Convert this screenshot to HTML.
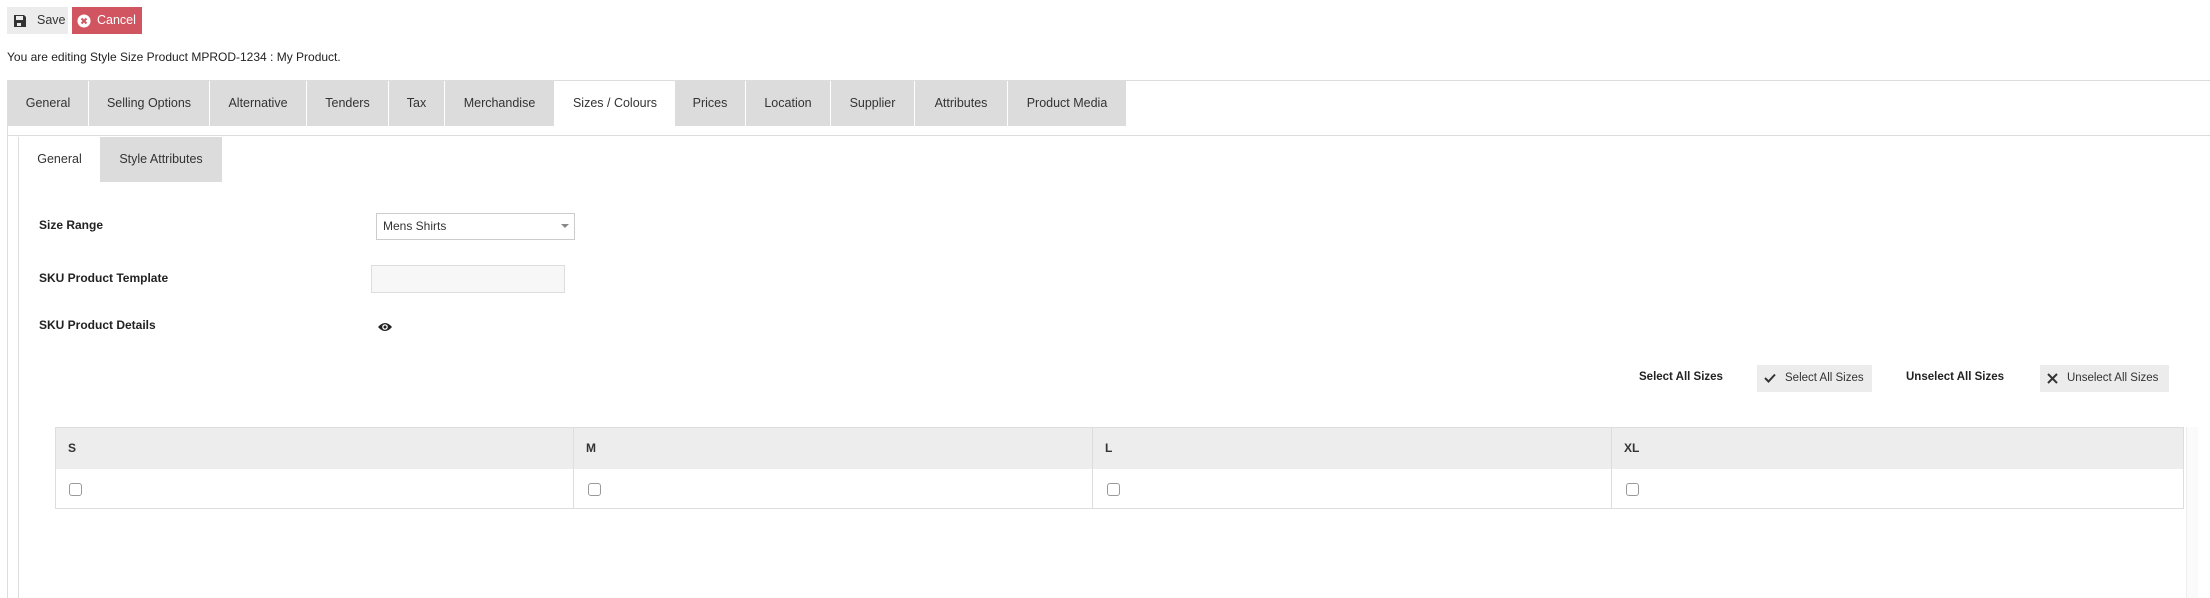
<!DOCTYPE html>
<html><head><meta charset="utf-8"><style>
*{box-sizing:border-box;margin:0;padding:0}
body{width:2210px;height:598px;overflow:hidden;background:#fff;font-family:"Liberation Sans",sans-serif;font-size:12.5px;color:#333;position:relative;white-space:nowrap}
.a{position:absolute}
.tab{position:absolute;top:81px;height:45px;background:#dcdcdc;line-height:45px;text-align:center;font-size:12.5px;color:#333}
.lbl{position:absolute;left:39px;font-weight:bold;font-size:12px;color:#222}
.cb{position:absolute;width:13px;height:13px;border:1px solid #999;border-radius:3px;background:#fff}
</style></head><body>
<div class="a" style="left:7px;top:7px;width:61px;height:27px;background:#ececec;line-height:27px;padding-left:30px;font-size:12.5px">Save</div>
<svg class="a" style="left:13px;top:14px" width="14" height="14" viewBox="0 0 14 14"><path d="M1 1h10l2 2v10H1z" fill="#333"/><rect x="3" y="2" width="7" height="4" fill="#ececec"/><rect x="4" y="9" width="4" height="3" fill="#ececec"/></svg>
<div class="a" style="left:72px;top:7px;width:70px;height:27px;background:#d15561;line-height:27px;padding-left:25px;color:#fff;font-size:12.5px">Cancel</div>
<svg class="a" style="left:77px;top:14px" width="14" height="14" viewBox="0 0 14 14"><circle cx="7" cy="7" r="6.5" fill="#fff"/><path d="M4.5 4.5l5 5M9.5 4.5l-5 5" stroke="#d15561" stroke-width="2"/></svg>
<div class="a" style="left:7px;top:50px;font-size:12px;color:#222">You are editing Style Size Product MPROD-1234 : My Product.</div>
<div class="a" style="left:7px;top:80px;width:2203px;height:1px;background:#ddd"></div>
<div class="a" style="left:7px;top:80px;width:1px;height:518px;background:#ddd"></div>
<div class="a" style="left:8px;top:135px;width:2202px;height:1px;background:#ddd"></div>
<div class="tab" style="left:8px;width:80px">General</div>
<div class="tab" style="left:89px;width:120px">Selling Options</div>
<div class="tab" style="left:210px;width:96px">Alternative</div>
<div class="tab" style="left:307px;width:81px">Tenders</div>
<div class="tab" style="left:389px;width:55px">Tax</div>
<div class="tab" style="left:445px;width:109px">Merchandise</div>
<div class="tab" style="left:555px;width:120px;background:#fff">Sizes / Colours</div>
<div class="tab" style="left:675px;width:70px">Prices</div>
<div class="tab" style="left:746px;width:84px">Location</div>
<div class="tab" style="left:831px;width:83px">Supplier</div>
<div class="tab" style="left:915px;width:92px">Attributes</div>
<div class="tab" style="left:1008px;width:118px">Product Media</div>
<div class="a" style="left:18px;top:137px;width:1px;height:461px;background:#ddd"></div>
<div class="a" style="left:19px;top:137px;width:81px;height:45px;line-height:45px;text-align:center">General</div>
<div class="a" style="left:100px;top:137px;width:122px;height:45px;line-height:45px;text-align:center;background:#dcdcdc">Style Attributes</div>
<div class="lbl" style="top:218px">Size Range</div>
<div class="a" style="left:376px;top:213px;width:199px;height:27px;border:1px solid #ccc;line-height:25px;padding-left:6px;font-size:12px">Mens Shirts</div>
<div class="a" style="left:561px;top:224px;width:0;height:0;border-left:4px solid transparent;border-right:4px solid transparent;border-top:4px solid #888"></div>
<div class="lbl" style="top:271px">SKU Product Template</div>
<div class="a" style="left:371px;top:265px;width:194px;height:28px;border:1px solid #ddd;background:#f7f7f7"></div>
<div class="lbl" style="top:318px">SKU Product Details</div>
<svg class="a" style="left:377px;top:321px" width="16" height="12" viewBox="0 0 16 12"><path d="M1 6Q8 -2 15 6Q8 14 1 6z" fill="#222"/><circle cx="8" cy="6" r="2.8" fill="#fff"/><circle cx="8" cy="6" r="1.5" fill="#222"/></svg>
<div class="a" style="left:1639px;top:371px;font-weight:bold;color:#222;font-size:11.5px">Select All Sizes</div>
<div class="a" style="left:1757px;top:365px;width:115px;height:27px;background:#ececec;line-height:27px;padding-left:28px;font-size:11.5px">Select All Sizes</div>
<svg class="a" style="left:1764px;top:373px" width="12" height="10" viewBox="0 0 12 10"><path d="M1 5l3.5 3.5L11 1.5" stroke="#333" stroke-width="2" fill="none"/></svg>
<div class="a" style="left:1906px;top:371px;font-weight:bold;color:#222;font-size:11.5px">Unselect All Sizes</div>
<div class="a" style="left:2040px;top:365px;width:129px;height:27px;background:#ececec;line-height:27px;padding-left:27px;font-size:11.5px">Unselect All Sizes</div>
<svg class="a" style="left:2047px;top:373px" width="11" height="11" viewBox="0 0 11 11"><path d="M1 1l9 9M10 1l-9 9" stroke="#333" stroke-width="2"/></svg>
<div class="a" style="left:2186px;top:427px;width:12px;height:171px;border-left:1px solid #eee;background:#fbfbfb"></div>
<div class="a" style="left:55px;top:427px;width:2129px;height:82px;border:1px solid #ddd">
<div class="a" style="left:0;top:0;width:2127px;height:41px;background:#ededed"></div>
<div class="a" style="left:517px;top:0;width:1px;height:80px;background:#ddd"></div>
<div class="a" style="left:1036px;top:0;width:1px;height:80px;background:#ddd"></div>
<div class="a" style="left:1555px;top:0;width:1px;height:80px;background:#ddd"></div>
<div class="a" style="left:12px;top:13px;font-weight:bold;font-size:12px">S</div>
<div class="a" style="left:530px;top:13px;font-weight:bold;font-size:12px">M</div>
<div class="a" style="left:1049px;top:13px;font-weight:bold;font-size:12px">L</div>
<div class="a" style="left:1568px;top:13px;font-weight:bold;font-size:12px">XL</div>
<div class="cb" style="left:13px;top:55px"></div>
<div class="cb" style="left:532px;top:55px"></div>
<div class="cb" style="left:1051px;top:55px"></div>
<div class="cb" style="left:1570px;top:55px"></div>
</div>
</body></html>
